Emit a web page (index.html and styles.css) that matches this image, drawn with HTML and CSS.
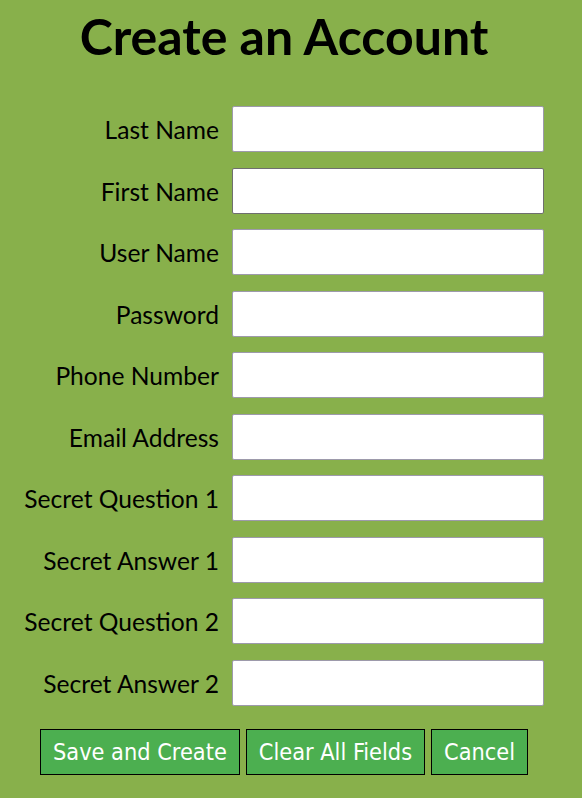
FILE: index.html
```html
<!DOCTYPE html>
<html>
<head>
<meta charset="utf-8">
<title>Create an Account</title>
<link rel="stylesheet" href="styles.css">
</head>
<body>
<div class="page">
  <h1 class="title">Create an Account</h1>
  <form class="form">
    <div class="grid">
      <label class="label" for="ln">Last Name</label><input class="field" id="ln" type="text">
      <label class="label" for="fn">First Name</label><input class="field field-active" id="fn" type="text">
      <label class="label" for="un">User Name</label><input class="field" id="un" type="text">
      <label class="label" for="pw">Password</label><input class="field" id="pw" type="password">
      <label class="label" for="ph">Phone Number</label><input class="field" id="ph" type="text">
      <label class="label" for="em">Email Address</label><input class="field" id="em" type="text">
      <label class="label" for="q1">Secret Question 1</label><input class="field" id="q1" type="text">
      <label class="label" for="a1">Secret Answer 1</label><input class="field" id="a1" type="text">
      <label class="label" for="q2">Secret Question 2</label><input class="field" id="q2" type="text">
      <label class="label" for="a2">Secret Answer 2</label><input class="field" id="a2" type="text">
    </div>
    <div class="actions">
      <button type="button" class="btn">Save and Create</button>
      <button type="button" class="btn">Clear All Fields</button>
      <button type="button" class="btn">Cancel</button>
    </div>
  </form>
</div>
</body>
</html>
```

FILE: styles.css
```css
html, body {
  margin: 0;
  padding: 0;
  background: #88b04b;
}
.page {
  width: 582px;
  height: 798px;
  background: #88b04b;
  font-family: Lato, "Open Sans", sans-serif;
  color: #000;
}
.title {
  margin: 0;
  padding-top: 6px;
  height: 60px;
  line-height: 60px;
  font-size: 50px;
  font-weight: 700;
  text-align: center;
  padding-right: 14px;
}
.form {
  margin: 0;
  padding-top: 40px;
}
.grid {
  display: grid;
  grid-template-columns: 207px 312px;
  column-gap: 13px;
  row-gap: 15.5px;
  padding-left: 12px;
  align-items: center;
}
.label {
  text-align: right;
  font-size: 24.6px;
  line-height: 30px;
  padding-top: 2px;
  white-space: nowrap;
}
.field {
  box-sizing: border-box;
  width: 312px;
  height: 46px;
  margin: 0;
  border: 1px solid #9d9aab;
  border-radius: 2px;
  background: #fff;
  padding: 0 6px;
  font-size: 20px;
  outline: none;
}
.field-active {
  border-color: #6f6f6f;
}
.actions {
  display: flex;
  gap: 6px;
  padding-left: 40px;
  margin-top: 23px;
}
.btn {
  box-sizing: border-box;
  height: 46px;
  margin: 0;
  padding: 0 12px;
  border: 1px solid #000;
  border-radius: 0;
  background: #4caf50;
  color: #fff;
  font-family: "DejaVu Sans Condensed", "DejaVu Sans", sans-serif;
  font-size: 23.3px;
  line-height: 44px;
}
```
